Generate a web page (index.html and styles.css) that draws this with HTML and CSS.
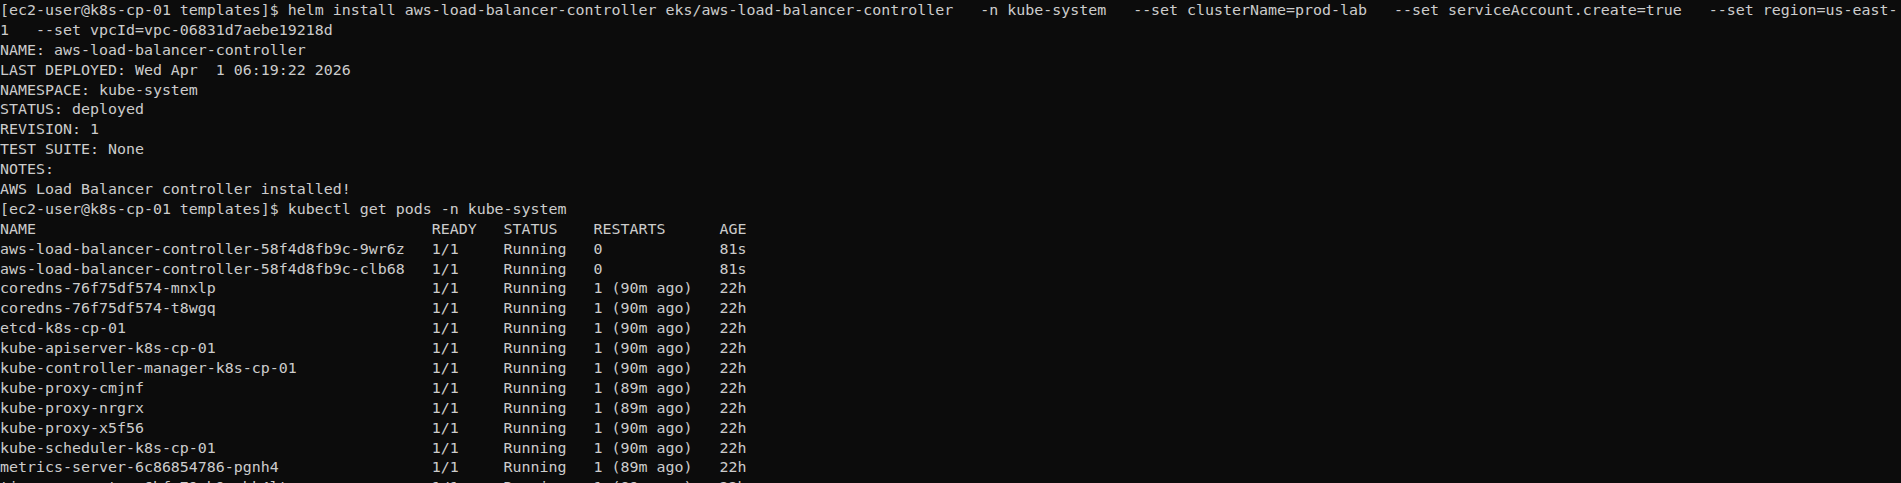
FILE: index.html
```html
<!DOCTYPE html>
<html lang="en">
<head>
<meta charset="utf-8">
<title>Terminal</title>
<link rel="stylesheet" href="styles.css">
</head>
<body>
<div class="term">
<div class="line">[ec2-user@k8s-cp-01 templates]$ helm install aws-load-balancer-controller eks/aws-load-balancer-controller   -n kube-system   --set clusterName=prod-lab   --set serviceAccount.create=true   --set region=us-east-</div>
<div class="line">1   --set vpcId=vpc-06831d7aebe19218d</div>
<div class="line">NAME: aws-load-balancer-controller</div>
<div class="line">LAST DEPLOYED: Wed Apr  1 06:19:22 2026</div>
<div class="line">NAMESPACE: kube-system</div>
<div class="line">STATUS: deployed</div>
<div class="line">REVISION: 1</div>
<div class="line">TEST SUITE: None</div>
<div class="line">NOTES:</div>
<div class="line">AWS Load Balancer controller installed!</div>
<div class="line">[ec2-user@k8s-cp-01 templates]$ kubectl get pods -n kube-system</div>
<div class="line">NAME                                            READY   STATUS    RESTARTS      AGE</div>
<div class="line">aws-load-balancer-controller-58f4d8fb9c-9wr6z   1/1     Running   0             81s</div>
<div class="line">aws-load-balancer-controller-58f4d8fb9c-clb68   1/1     Running   0             81s</div>
<div class="line">coredns-76f75df574-mnxlp                        1/1     Running   1 (90m ago)   22h</div>
<div class="line">coredns-76f75df574-t8wgq                        1/1     Running   1 (90m ago)   22h</div>
<div class="line">etcd-k8s-cp-01                                  1/1     Running   1 (90m ago)   22h</div>
<div class="line">kube-apiserver-k8s-cp-01                        1/1     Running   1 (90m ago)   22h</div>
<div class="line">kube-controller-manager-k8s-cp-01               1/1     Running   1 (90m ago)   22h</div>
<div class="line">kube-proxy-cmjnf                                1/1     Running   1 (89m ago)   22h</div>
<div class="line">kube-proxy-nrgrx                                1/1     Running   1 (89m ago)   22h</div>
<div class="line">kube-proxy-x5f56                                1/1     Running   1 (90m ago)   22h</div>
<div class="line">kube-scheduler-k8s-cp-01                        1/1     Running   1 (90m ago)   22h</div>
<div class="line">metrics-server-6c86854786-pgnh4                 1/1     Running   1 (89m ago)   22h</div>
<div class="line">tigera-operator-6bfc79cb9c-hk4lt                1/1     Running   1 (89m ago)   22h</div>
</div>
</body>
</html>
```

FILE: styles.css
```css
html, body {
  margin: 0;
  padding: 0;
  background: #0c0c0c;
  height: 100%;
  overflow: hidden;
}

.term {
  display: flex;
  flex-direction: column;
  font-family: "DejaVu Sans Mono", "Liberation Mono", monospace;
  font-size: 14.95px;
  line-height: 19.9px;
  color: #cccccc;
  padding-top: 1px;
}

.line {
  white-space: pre;
  height: 19.9px;
}
```
